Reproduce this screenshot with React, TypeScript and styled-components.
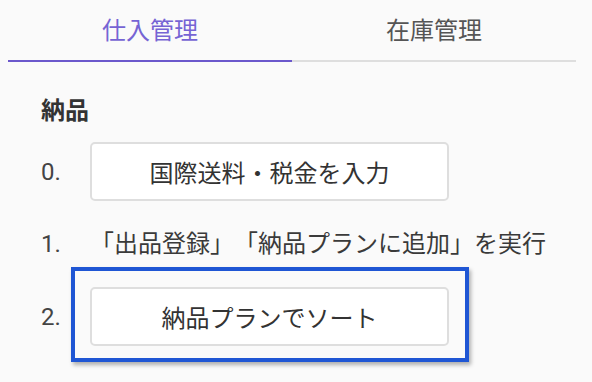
import styled, { createGlobalStyle } from "styled-components";

const GlobalStyle = createGlobalStyle`
    body {
        margin: 0;
        background: #fafafa;
        font-family: Roboto, "Noto Sans CJK JP", sans-serif;
        color: #333;
        text-spacing-trim: space-all;
    }
`;

const Page = styled.main`
    margin: 0 16px 0 8px;
    padding-bottom: 30px;
`;

const TabBar = styled.nav`
    display: grid;
    grid-template-columns: 1fr 1fr;
    border-bottom: 2px solid #dedede;
`;

const Tab = styled.div<{ $active?: boolean }>`
    height: 62px;
    box-sizing: border-box;
    margin-bottom: -2px;
    padding-bottom: 4px;
    border-bottom: 2px solid ${(p) => (p.$active ? "#6b58cc" : "transparent")};
    display: flex;
    align-items: center;
    justify-content: center;
    font-size: 24px;
    color: ${(p) => (p.$active ? "#7664d4" : "#555")};
`;

const Section = styled.section`
    padding: 31px 0 0 33px;
    display: grid;
    gap: 25px;
`;

const Heading = styled.h6`
    margin: 0 0 -12px;
    font-size: 24px;
    line-height: 36px;
    font-weight: 700;
    color: #333;
`;

const Step = styled.div`
    display: grid;
    grid-template-columns: 49px 1fr;
    align-items: center;
    font-size: 24px;
    line-height: 36px;
    color: #3a3a3a;
`;

const Num = styled.span`
    color: #444;
`;

const Label = styled.span`
    white-space: nowrap;
`;

const Highlight = styled.div<{ $on?: boolean }>`
    position: relative;
    display: flex;
    width: 359px;

    &::after {
        content: "";
        display: ${(p) => (p.$on ? "block" : "none")};
        position: absolute;
        top: -20px;
        right: -20px;
        bottom: -16px;
        left: -19px;
        border: 4px solid #1f56d4;
        box-shadow: 2px 3px 4px rgba(0, 0, 0, 0.3);
        pointer-events: none;
    }
`;

const Button = styled.button`
    width: 359px;
    height: 59px;
    box-sizing: border-box;
    background: #fff;
    border: 2px solid #dedede;
    border-radius: 5px;
    font-family: inherit;
    font-size: 24px;
    color: #333;
    cursor: pointer;
`;

function App() {
    return (
        <Page>
            <GlobalStyle />
            <TabBar>
                <Tab $active>仕入管理</Tab>
                <Tab>在庫管理</Tab>
            </TabBar>
            <Section>
                <Heading>納品</Heading>
                <Step>
                    <Num>0.</Num>
                    <Highlight>
                        <Button>国際送料・税金を入力</Button>
                    </Highlight>
                </Step>
                <Step>
                    <Num>1.</Num>
                    <Label>「出品登録」「納品プランに追加」を実行</Label>
                </Step>
                <Step>
                    <Num>2.</Num>
                    <Highlight $on>
                        <Button>納品プランでソート</Button>
                    </Highlight>
                </Step>
            </Section>
        </Page>
    );
}

export default App;
